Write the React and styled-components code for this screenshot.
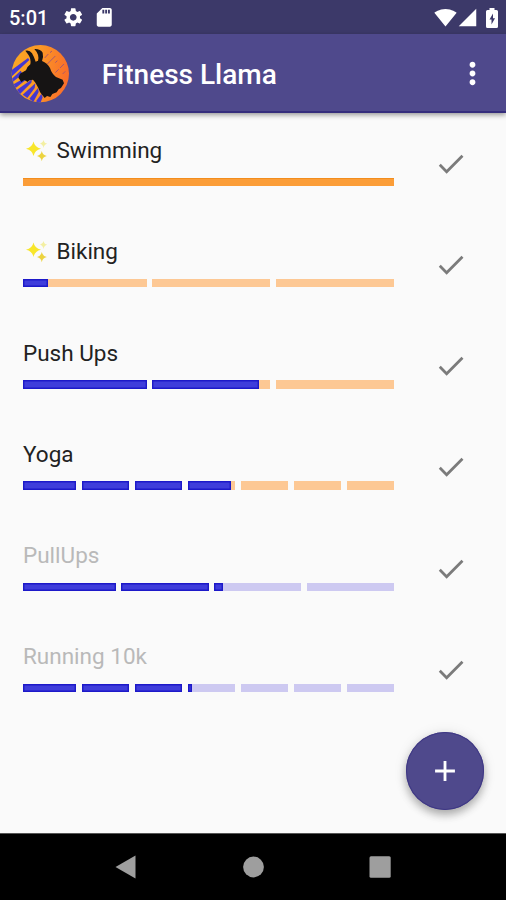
import React, { useState } from "react";
import styled, { createGlobalStyle } from "styled-components";
import {
  MdAdd,
  MdCheck,
  MdMoreVert,
  MdSdCard,
  MdSettings,
  MdSignalCellular4Bar,
  MdSignalWifi4Bar,
} from "react-icons/md";

const BAR_WIDTH = 371;
const GAP = 5.6;

const initialExercises = [
  { id: 1, name: "Swimming", parts: 1, done: 0, sparkle: true, complete: true },
  { id: 2, name: "Biking", parts: 3, done: 25, sparkle: true },
  { id: 3, name: "Push Ups", parts: 3, done: 236 },
  { id: 4, name: "Yoga", parts: 7, done: 208 },
  { id: 5, name: "PullUps", parts: 4, done: 200, resting: true },
  { id: 6, name: "Running 10k", parts: 7, done: 169.5, resting: true },
];

// how much of one segment is filled, in percent
const segmentFill = (index, parts, done) => {
  const width = BAR_WIDTH / parts;
  const start = index * width + (index > 0 ? GAP : 0);
  const length = (index + 1) * width - start;
  return Math.max(0, Math.min(1, (done - start) / length)) * 100;
};

const Sparkles = () => (
  <SparkleIcon viewBox="0 0 22 23">
    <path
      fill="#f8e62b"
      d="M7.5 2.5Q8.7 8.3 15 9.7Q8.7 11 7.5 17Q6.3 11 0 9.7Q6.3 8.3 7.5 2.5Z"
    />
    <path
      fill="#ecd33f"
      d="M15.8 12Q16.5 16 20.8 17Q16.5 18 15.8 22.3Q15 18 11 17Q15 16 15.8 12Z"
    />
    <path
      fill="#f3efa2"
      d="M17.5 1Q18 4 21.3 4.8Q18 5.6 17.5 9Q17 5.6 14 4.8Q17 4 17.5 1Z"
    />
  </SparkleIcon>
);

const Llama = () => (
  <LogoIcon viewBox="33 135 176 172">
    <defs>
      <linearGradient id="sun" x1="0" y1="0" x2="1" y2="0.15">
        <stop offset="0" stopColor="#fba922" />
        <stop offset="0.5" stopColor="#fb9826" />
        <stop offset="1" stopColor="#f9702a" />
      </linearGradient>
      <clipPath id="disc">
        <circle cx="121" cy="221" r="86" />
      </clipPath>
    </defs>
    <circle cx="121" cy="221" r="86" fill="url(#sun)" />
    <g clipPath="url(#disc)">
      <path
        fill="#4438d0"
        d="M30 214L84 174L88 180L34 230ZM34 238L62 212L68 222L38 246ZM38 254L80 230L80 238L44 266ZM50 270L96 238L94 248L60 282ZM68 284L106 250L104 264L82 294ZM88 296L114 264L116 276L100 306ZM108 304L124 282L128 292L120 312Z"
      />
      <path
        fill="none"
        strokeWidth="3"
        stroke="#a8566f"
        d="M134 174L145 162M150 158L156 153M142 192L166 168M166 188L172 182M166 218L176 208M180 204L192 192M188 222L196 214"
      />
    </g>
    <path
      fill="#161414"
      d="M76 152Q89 149 96 160Q102 170 107 185L114 182Q119 164 103 147Q121 146 128 158Q131 169 126 183Q142 189 150 204Q155 221 168 231L188 239L192 250L183 264L176 268L170 277L157 282L151 291L141 288L134 294L126 284Q119 277 115 264Q108 248 99 239Q87 239 83 246L73 240L64 246L55 233L60 221L78 211Q82 199 91 193Q94 177 85 164Z"
    />
  </LogoIcon>
);

const Exercise = ({ exercise, onCheck }) => (
  <Row>
    <Details>
      <Name $resting={exercise.resting}>
        {exercise.sparkle && <Sparkles />}
        {exercise.name}
      </Name>
      <Progress $parts={exercise.parts}>
        {Array.from({ length: exercise.parts }, (_, i) => (
          <Segment
            key={i}
            $resting={exercise.resting}
            $complete={exercise.complete}
          >
            <Fill
              style={{
                width: segmentFill(i, exercise.parts, exercise.done) + "%",
              }}
            />
          </Segment>
        ))}
      </Progress>
    </Details>
    <CheckButton
      aria-label={"Check " + exercise.name}
      onClick={() => onCheck(exercise.id)}
    >
      <MdCheck size={33.7} />
    </CheckButton>
  </Row>
);

const App = () => {
  const [exercises, setExercises] = useState(initialExercises);

  const checkExercise = (id) => {
    setExercises(
      exercises.map((exercise) =>
        exercise.id === id
          ? { ...exercise, done: 0, complete: true, resting: false }
          : exercise
      )
    );
  };

  return (
    <Screen>
      <GlobalStyle />
      <StatusBar>
        <Clock>5:01</Clock>
        <MdSettings size={22.5} />
        <SdIcon size={22.5} />
        <Spacer />
        <MdSignalWifi4Bar size={23} />
        <SignalIcon size={21} />
        <BatteryIcon viewBox="0 0 12 20">
          <path
            fill="#fff"
            fillRule="evenodd"
            d="M3.5 0H8.5V2H10.5Q12 2 12 3.5V18.5Q12 20 10.5 20H1.5Q0 20 0 18.5V3.5Q0 2 1.5 2H3.5ZM7 5.5L3.5 11.5H5.5V16.5L9 10.2H7Z"
          />
        </BatteryIcon>
      </StatusBar>
      <AppBar>
        <Llama />
        <Title>Fitness Llama</Title>
        <MenuIcon size={35} />
      </AppBar>
      <List>
        {exercises.map((exercise) => (
          <Exercise
            key={exercise.id}
            exercise={exercise}
            onCheck={checkExercise}
          />
        ))}
      </List>
      <AddButton aria-label="Add">
        <MdAdd size={34} />
      </AddButton>
      <NavBar>
        <svg width="22" height="24" viewBox="0 0 22 24">
          <path fill="#9e9e9e" d="M.5 12L20.5 .5V23.5Z" />
        </svg>
        <svg width="22" height="22" viewBox="0 0 22 22">
          <circle cx="11.5" cy="11" r="10.4" fill="#9e9e9e" />
        </svg>
        <svg width="22" height="22" viewBox="0 0 22 22">
          <rect x=".5" y=".3" width="21.2" height="21.4" rx="1.5" fill="#9e9e9e" />
        </svg>
      </NavBar>
    </Screen>
  );
};

const GlobalStyle = createGlobalStyle`
  * {
    box-sizing: border-box;
  }

  body {
    margin: 0;
    font-family: Roboto, sans-serif;
  }
`;

const Screen = styled.div`
  position: relative;
  display: flex;
  flex-direction: column;
  width: 506px;
  height: 900px;
  overflow: hidden;
  background-color: #fafafa;
`;

const StatusBar = styled.div`
  display: flex;
  align-items: center;
  flex: none;
  height: 34px;
  padding: 1px 8px 0 9px;
  color: #fff;
  background-color: #3c3969;
`;

const Clock = styled.span`
  width: 53px;
  font-size: 20px;
  font-weight: 500;
  line-height: 24px;
`;

const SdIcon = styled(MdSdCard)`
  margin-left: 8px;
`;

const Spacer = styled.div`
  flex: 1;
`;

const SignalIcon = styled(MdSignalCellular4Bar)`
  margin-right: 8px;
`;

const BatteryIcon = styled.svg`
  width: 12px;
  height: 20px;
`;

const AppBar = styled.header`
  display: flex;
  align-items: center;
  flex: none;
  height: 79px;
  padding: 3px 16px 0 11px;
  color: #fff;
  background-color: #4f498c;
  border-bottom: 2px solid #352d7c;
  box-shadow: 0 2px 5px rgba(0, 0, 0, 0.4);
  z-index: 1;
`;

const LogoIcon = styled.svg`
  width: 58.7px;
  height: 57.3px;
`;

const Title = styled.h1`
  flex: 1;
  margin: 2px 0 0 32px;
  font-size: 28px;
  font-weight: 500;
  line-height: 34px;
`;

const MenuIcon = styled(MdMoreVert)`
  margin-bottom: 1px;
`;

const List = styled.ul`
  flex: 1;
  margin: 0;
  padding: 0;
  list-style-type: none;
`;

const Row = styled.li`
  display: flex;
  height: 101.25px;
  padding-left: 23px;
`;

const Details = styled.div`
  width: ${BAR_WIDTH}px;
  padding-top: 22px;
`;

const Name = styled.div`
  display: flex;
  align-items: center;
  height: 30px;
  font-size: 22.5px;
  color: ${(props) => (props.$resting ? "#b9b9b9" : "#222")};
`;

const SparkleIcon = styled.svg`
  width: 22px;
  height: 23px;
  margin: 0 8.5px 0 3px;
`;

const Progress = styled.div`
  display: grid;
  grid-template-columns: repeat(${(props) => props.$parts}, minmax(0, 1fr));
  height: 8.5px;
  margin-top: 12.7px;
`;

const Segment = styled.div`
  background-color: ${(props) =>
    props.$complete ? "#fb9d38" : props.$resting ? "#cdc9f1" : "#fdc894"};
  background-clip: content-box;
  ${(props) => props.$complete && "box-shadow: inset 0 1px #f28d1d;"}

  &:not(:first-child) {
    padding-left: ${GAP}px;
  }
`;

const Fill = styled.div`
  height: 100%;
  background-color: #3f3ddb;
  box-shadow: inset 0 0 0 1.4px #1d19c9;
`;

const CheckButton = styled.button`
  display: flex;
  align-items: center;
  justify-content: center;
  width: 112px;
  height: 101px;
  padding: 0 0 0 1px;
  border: none;
  color: #7b7b7b;
  background: none;
  cursor: pointer;
`;

const AddButton = styled.button`
  position: absolute;
  right: 22px;
  bottom: 90px;
  display: flex;
  align-items: center;
  justify-content: center;
  width: 78.5px;
  height: 78.5px;
  padding: 0;
  border: none;
  border-radius: 50%;
  color: #fff;
  background-color: #4f498c;
  box-shadow: inset 0 0 0 1px #3f3885, 0 5px 8px rgba(0, 0, 0, 0.28),
    0 1px 14px rgba(0, 0, 0, 0.1);
  cursor: pointer;
`;

const NavBar = styled.nav`
  display: flex;
  align-items: center;
  justify-content: space-between;
  flex: none;
  height: 67px;
  padding: 0 115px;
  border-top: 1px solid #555;
  background-color: #000;
`;

export default App;
